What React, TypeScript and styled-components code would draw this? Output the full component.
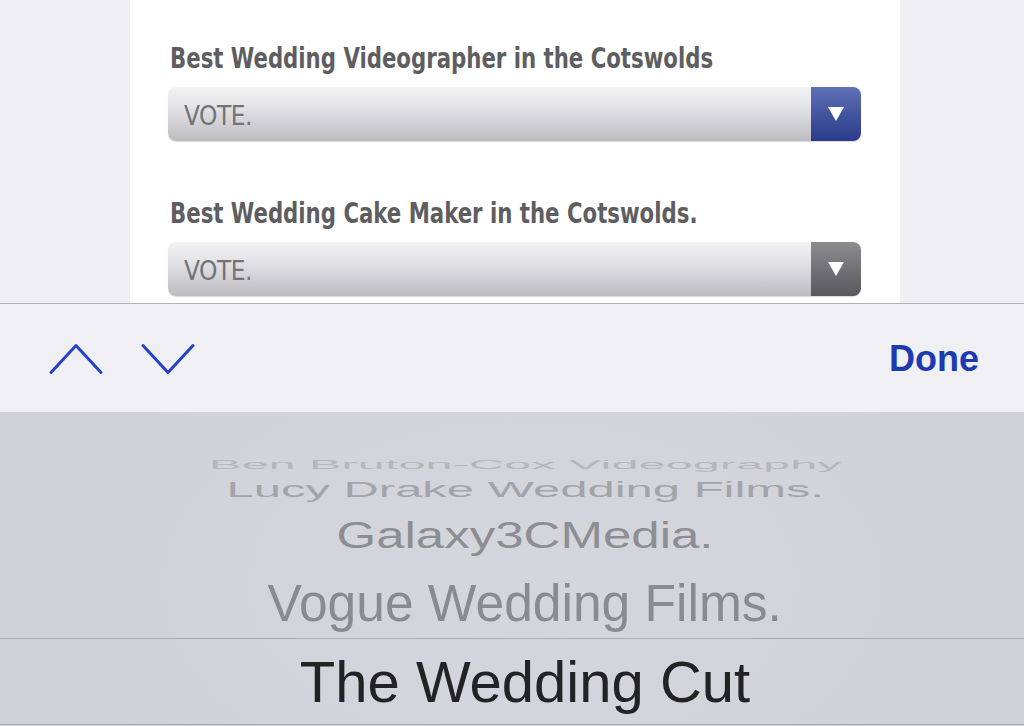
import React from 'react';
import styled, { createGlobalStyle } from 'styled-components';

interface Category {
  title: string;
  accent: 'blue' | 'gray';
}

interface WheelItem {
  label: string;
  height: number;
  scaleX: number;
  scaleY: number;
  color: string;
}

const categories: Category[] = [
  { title: 'Best Wedding Videographer in the Cotswolds', accent: 'blue' },
  { title: 'Best Wedding Cake Maker in the Cotswolds.', accent: 'gray' },
];

const wheelItems: WheelItem[] = [
  { label: 'Ben Bruton-Cox Videography', height: 26, scaleX: 0.955, scaleY: 0.26, color: '#b6b7bd' },
  { label: 'Lucy Drake Wedding Films.', height: 25, scaleX: 0.96, scaleY: 0.42, color: '#a3a4aa' },
  { label: 'Galaxy3CMedia.', height: 66, scaleX: 1, scaleY: 0.72, color: '#8d8e93' },
  { label: 'Vogue Wedding Films.', height: 70, scaleX: 1.01, scaleY: 1, color: '#8a8b90' },
];

const GlobalStyle = createGlobalStyle`
  html, body {
    margin: 0;
    padding: 0;
    background: #efeef3;
    overflow: hidden;
  }
`;

const App = () => {
  return (
    <Screen>
      <GlobalStyle />
      <PageArea>
        <Card>
          {categories.map((cat) => (
            <Field key={cat.title}>
              <Heading>
                <HeadingText>{cat.title}</HeadingText>
              </Heading>
              <Select>
                <SelectText>VOTE.</SelectText>
                <ArrowBox $accent={cat.accent}>
                  <Triangle />
                </ArrowBox>
              </Select>
            </Field>
          ))}
        </Card>
      </PageArea>

      <Toolbar>
        <NavArrows>
          <svg width="54" height="32" viewBox="0 0 54 32">
            <polyline points="2,29.5 27,2.5 52,29.5" fill="none" stroke="#2443c9" strokeWidth="3" strokeLinecap="round" strokeLinejoin="round" />
          </svg>
          <svg width="54" height="32" viewBox="0 0 54 32">
            <polyline points="2,2.5 27,29.5 52,2.5" fill="none" stroke="#2443c9" strokeWidth="3" strokeLinecap="round" strokeLinejoin="round" />
          </svg>
        </NavArrows>
        <DoneButton>Done</DoneButton>
      </Toolbar>

      <Picker>
        <PickerSpacer />
        {wheelItems.map((item) => (
          <WheelRow key={item.label} $h={item.height}>
            <WheelText
              $color={item.color}
              style={{ transform: `scale(${item.scaleX}, ${item.scaleY})` }}
            >
              {item.label}
            </WheelText>
          </WheelRow>
        ))}
        <SelectedRow>
          <SelectedText>The Wedding Cut</SelectedText>
        </SelectedRow>
      </Picker>
    </Screen>
  );
};

export default App;

const Screen = styled.div`
  width: 1024px;
  height: 726px;
  display: flex;
  flex-direction: column;
  overflow: hidden;
  background: #efeef3;
`;

const PageArea = styled.div`
  height: 303px;
  flex-shrink: 0;
  overflow: hidden;
  border-bottom: 1px solid #b1b1b6;
  padding-left: 130px;
`;

const Card = styled.div`
  width: 770px;
  height: 100%;
  background: #ffffff;
  box-sizing: border-box;
  padding: 40px 39px 0 38px;
  display: flex;
  flex-direction: column;
  gap: 54px;
`;

const Field = styled.div`
  display: flex;
  flex-direction: column;
  gap: 11px;
`;

const Heading = styled.div`
  height: 36px;
  padding-left: 2px;
  white-space: nowrap;
`;

const HeadingText = styled.span`
  display: inline-block;
  font-family: 'DejaVu Sans Condensed', 'DejaVu Sans', sans-serif;
  font-weight: bold;
  font-size: 29px;
  line-height: 36px;
  color: #5e5e61;
  transform: scaleX(0.815);
  transform-origin: left center;
`;

const Select = styled.div`
  height: 54px;
  display: flex;
  align-items: stretch;
  border-radius: 8px;
  overflow: hidden;
  background: linear-gradient(#f3f3f5 0%, #e4e4e7 35%, #c9c9cd 80%, #bcbcc0 100%);
  box-shadow: 0 1px 1px rgba(0, 0, 0, 0.15);
`;

const SelectText = styled.div`
  flex: 1;
  display: flex;
  align-items: center;
  padding-left: 16px;
  padding-top: 3px;
  font-family: 'DejaVu Sans Condensed', 'DejaVu Sans', sans-serif;
  font-size: 26px;
  color: #737376;
  letter-spacing: -0.5px;
`;

const ArrowBox = styled.div<{ $accent: 'blue' | 'gray' }>`
  width: 50px;
  display: flex;
  align-items: center;
  justify-content: center;
  background: ${(p) =>
    p.$accent === 'blue'
      ? 'linear-gradient(#6171b6 0%, #44559f 50%, #2b3b8c 100%)'
      : 'linear-gradient(#8e8e92 0%, #727276 50%, #59595d 100%)'};
`;

const Triangle = styled.div`
  width: 0;
  height: 0;
  border-left: 8px solid transparent;
  border-right: 8px solid transparent;
  border-top: 14px solid #ffffff;
`;

const Toolbar = styled.div`
  height: 108px;
  flex-shrink: 0;
  background: #f0eff4;
  display: flex;
  align-items: center;
  justify-content: space-between;
  padding: 0 45px 0 49px;
`;

const NavArrows = styled.div`
  display: flex;
  gap: 38px;
  padding-top: 1px;
`;

const DoneButton = styled.div`
  font-family: 'Liberation Sans', Arial, sans-serif;
  font-weight: bold;
  font-size: 36px;
  color: #1c3bb0;
  padding-top: 2px;
`;

const Picker = styled.div`
  flex: 1;
  display: flex;
  flex-direction: column;
  background: radial-gradient(ellipse 46% 90% at 51% 55%, #d5d6dc 0%, #d3d4db 70%, #d1d2d9 100%);
  padding-left: 26px;
`;

const PickerSpacer = styled.div`
  height: 39px;
`;

const WheelRow = styled.div<{ $h: number }>`
  height: ${(p) => p.$h}px;
  display: flex;
  justify-content: center;
  align-items: center;
`;

const WheelText = styled.div<{ $color: string }>`
  font-family: 'Liberation Sans', Arial, sans-serif;
  font-size: 51px;
  line-height: 51px;
  white-space: nowrap;
  color: ${(p) => p.$color};
  transform-origin: center;
`;

const SelectedRow = styled.div`
  height: 85px;
  border-top: 1px solid #a8a9b0;
  border-bottom: 1px solid #a8a9b0;
  margin-left: -26px;
  padding-left: 26px;
  display: flex;
  justify-content: center;
  align-items: center;
`;

const SelectedText = styled.div`
  font-family: 'Liberation Sans', Arial, sans-serif;
  font-size: 58px;
  line-height: 58px;
  color: #232326;
  white-space: nowrap;
`;
